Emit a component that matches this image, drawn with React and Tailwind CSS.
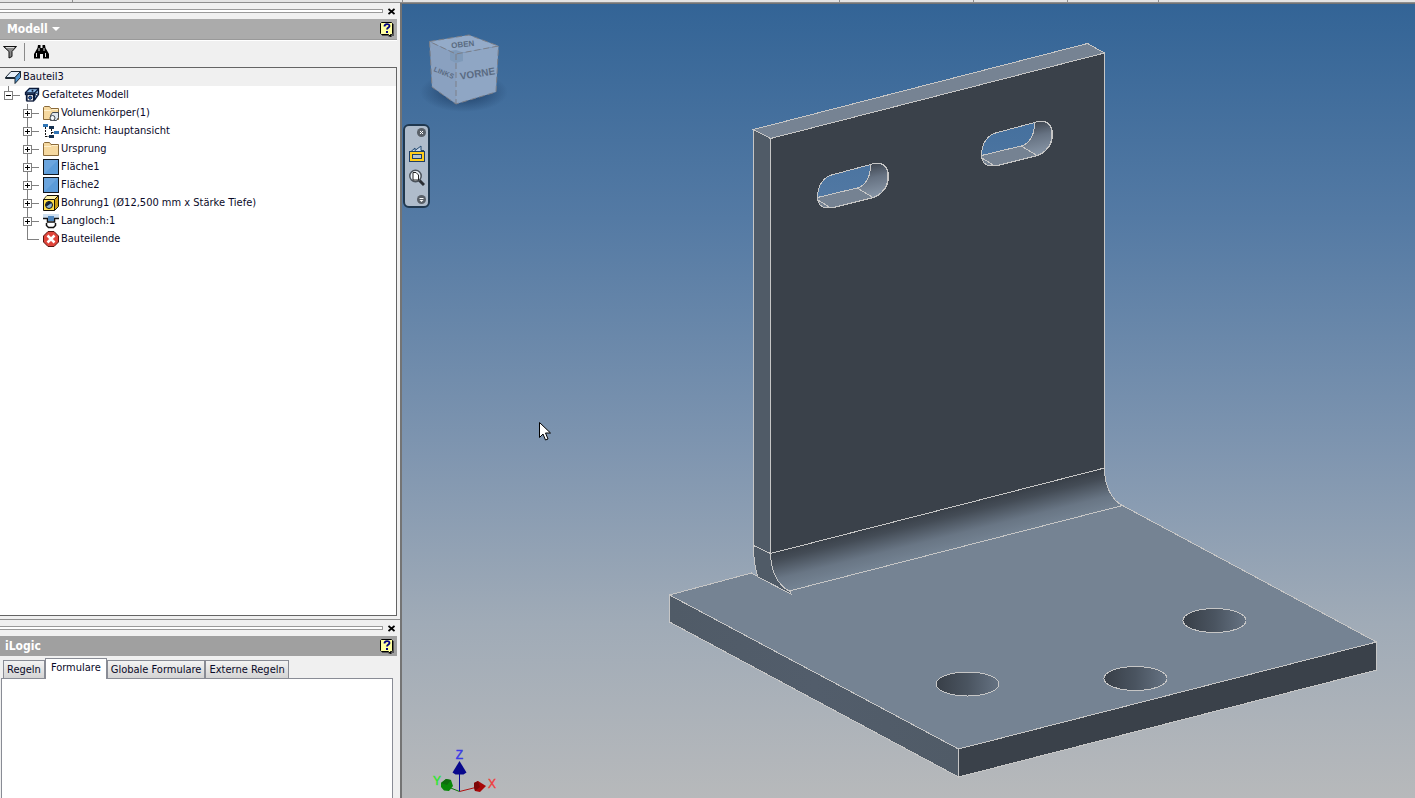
import React, { useState } from 'react';

// Edge colour shared by every visible edge of the part
const EDGE = '#c6c6c6';

const treeItems = [
  { label: 'Volumenkörper(1)', icon: 'solids' },
  { label: 'Ansicht: Hauptansicht', icon: 'view' },
  { label: 'Ursprung', icon: 'folder' },
  { label: 'Fläche1', icon: 'face' },
  { label: 'Fläche2', icon: 'face' },
  { label: 'Bohrung1 (Ø12,500 mm x Stärke Tiefe)', icon: 'hole' },
  { label: 'Langloch:1', icon: 'slot' },
  { label: 'Bauteilende', icon: 'end' },
];

const tabs = ['Regeln', 'Formulare', 'Globale Formulare', 'Externe Regeln'];

const TreeIcon = ({ name }) => (
  <svg className="h-4 w-4 shrink-0" viewBox="0 0 16 16" aria-hidden="true">
    {name === 'part' && (
      <>
        <path d="M.5 8.500 6 2.500h9.500L10 8.500z" fill="#e4eefa" stroke="#1b2733" />
        <path d="M10 8.500 15.500 2.500v6L10 14.500z" fill="#4f93cf" stroke="#1b2733" />
        <path d="M.5 8.500v1H10" fill="none" stroke="#1b2733" />
      </>
    )}
    {name === 'folded' && (
      <>
        <path d="M1.500 7.500v-2l4-4h9v6l-4 5.500h-8V8z" fill="#8fbdea" stroke="#0b1a3a" strokeWidth="1.300" />
        <path d="M1.500 6h9v7M10.500 6l4-4" fill="none" stroke="#0b1a3a" strokeWidth="1.300" />
        <rect x="3" y="7.500" width="6.500" height="6.500" fill="#fff" stroke="#0b1a3a" strokeWidth="1.300" />
        <circle cx="6.200" cy="10.700" r="1.600" fill="#2a64b4" stroke="#0b1a3a" />
        <circle cx="8.500" cy="3.800" r="1" fill="#0b1a3a" />
        <circle cx="12.500" cy="7.500" r="1.200" fill="#fff" stroke="#0b1a3a" />
      </>
    )}
    {(name === 'folder' || name === 'solids') && (
      <>
        <path d="M.5 14.500v-12l1-1h5l1.500 2h7.500v11z" fill="#f6d9a0" stroke="#8a6a3a" />
        <path d="M1 5.500h7l1-1h6" fill="none" stroke="#fff0cc" />
      </>
    )}
    {name === 'solids' && (
      <>
        <path d="M9.500 7.500h6v5l-2 3h-6v-5z" fill="#dfe6ee" stroke="#3f4750" />
        <circle cx="9.500" cy="13" r="2.500" fill="#f4f6f8" stroke="#3f4750" />
      </>
    )}
    {name === 'view' && (
      <>
        <rect x="0" y="1" width="5" height="3" fill="#2f74b5" />
        <rect x="6" y="3" width="5" height="3" fill="#14304f" />
        <rect x="6" y="12" width="5" height="3" fill="#14304f" />
        <rect x="11" y="8" width="5" height="3" fill="#2f74b5" />
        <path d="M2.500 4v10M2.500 13.500H6M8.500 6v5M8.500 9.500H11" stroke="#111" strokeDasharray="2 1" fill="none" />
      </>
    )}
    {name === 'face' && (
      <>
        <rect x=".5" y=".5" width="15" height="15" fill="#5b9bd8" stroke="#10151c" />
        <path d="M1 1h14L1 15z" fill="#6ba5de" />
      </>
    )}
    {name === 'hole' && (
      <>
        <path d="M.5 4.500 4 .5h11.500v11l-4 4H.5z" fill="#ffe04a" stroke="#15120a" />
        <path d="M1 4.500 4 1h11l-3.500 3.500z" fill="#fff2a8" />
        <path d="M11.500 15V4.500L15 1v10.500z" fill="#c99b12" />
        <path d="M.5 4.500h11v11M11.500 4.500l4-4" fill="none" stroke="#15120a" />
        <circle cx="6" cy="10" r="3.500" fill="#8db4da" stroke="#15120a" />
        <path d="M3.500 11.500a3 3 0 0 1 5-3.500z" fill="#142030" />
      </>
    )}
    {name === 'slot' && (
      <>
        <rect x="0" y="1" width="16" height="4" fill="#cfe0f0" />
        <path d="M0 5.500h4.500V9h7V5.500H16" fill="none" stroke="#111" strokeWidth="1.500" />
        <rect x="5" y="3" width="6" height="5" fill="#4f86bd" />
        <path d="M3.500 10v2.500l2 2h5l2-2V10" fill="#fff" stroke="#111" strokeWidth="1.500" />
      </>
    )}
    {name === 'end' && (
      <>
        <path d="M5 .5h6L15.500 5v6L11 15.500H5L.5 11V5z" fill="#e0443a" stroke="#5a1410" />
        <path d="m4.500 4.500 7 7m0-7-7 7" stroke="#fff" strokeWidth="2.500" />
      </>
    )}
  </svg>
);

// Line column in front of a node, with its plus / minus box
const Branch = ({ open, last, first }) => (
  <svg className="block h-[18px] w-4" viewBox="0 0 16 18" shapeRendering="crispEdges" aria-hidden="true">
    <path d={last || first ? 'M4.500 0v9.500' : 'M4.500 0v18'} stroke="#808080" fill="none" />
    <path d="M4 9.500h12" stroke="#808080" />
    {!last && (
      <>
        <rect x=".5" y="5.500" width="8" height="8" fill="#fff" stroke="#808080" />
        <path d="M2 9.500h5" stroke="#000" />
        {!open && <path d="M4.500 7v5" stroke="#000" />}
      </>
    )}
  </svg>
);

const PanelGrip = ({ label }) => (
  <div className="flex h-4 shrink-0 items-center">
    <div className="h-1 flex-1 border-y border-r border-[#9a9a9a] bg-white" />
    <button type="button" aria-label={label} className="ml-1 mr-px flex h-4 w-[9px] items-center justify-center">
      <svg className="h-[7px] w-[7px]" viewBox="0 0 7 7" aria-hidden="true">
        <path d="m.5 1 6 5m0-5-6 5" stroke="#000" strokeWidth="1.800" />
      </svg>
    </button>
  </div>
);

const HelpButton = () => (
  <button type="button" aria-label="Hilfe" className="mr-[3px] block">
    <svg className="block h-[15px] w-[14px]" viewBox="0 0 14 15" aria-hidden="true">
      <path d="M2 2h12v12h-2v1H9l-1-1H2z" fill="#555" />
      <path d="M1.500.5h10l1 1v10l-1 1h-1v2l-2-2h-7l-1-1v-10z" fill="#ffffa0" stroke="#000" />
      <path d="M4.500 4.500c0-3 5-3 5-.5 0 1.500-2.500 1.500-2.500 3.500" fill="none" stroke="#000080" strokeWidth="1.800" />
      <rect x="6" y="9" width="2" height="2" fill="#000080" />
    </svg>
  </button>
);

// Long hole, drawn for the right one; the left one is the same shape moved
const SlotWalls = () => (
  <>
    <path d="M1034.500 122.500C1045 119 1052 123 1052 135c0 10-7 18-15 20.500l-16-9.500c8-2 14-11 13.500-23.500z" fill="url(#slotEnd)" stroke={EDGE} />
    <path d="M981.500 155.500 1021 146l16 9.500-40 10c-10 2-15-2-15.500-10z" fill="#758292" stroke={EDGE} />
    <path d="m982 158 12 7.500" stroke={EDGE} />
    <path d="M981.500 155.500c0-12 6-20 14-22.500l39-10.500" fill="none" stroke={EDGE} />
  </>
);

const PartDrawing = () => (
  <svg className="absolute inset-0 h-full w-full" viewBox="402 4 1013 794" role="img" aria-label="Blechteil">
    <defs>
      <linearGradient id="bend" gradientUnits="userSpaceOnUse" x1="771" y1="553" x2="781" y2="593">
        <stop offset="0" stopColor="#3a414a" />
        <stop offset=".2" stopColor="#444c56" />
        <stop offset=".65" stopColor="#697685" />
        <stop offset="1" stopColor="#758494" />
      </linearGradient>
      <linearGradient id="slotEnd" x1="0" y1="0" x2=".2" y2="1">
        <stop offset="0" stopColor="#343a43" />
        <stop offset=".5" stopColor="#667282" />
        <stop offset="1" stopColor="#8492a3" />
      </linearGradient>
      <linearGradient id="bore">
        <stop offset=".05" stopColor="#3a414a" />
        <stop offset=".5" stopColor="#4a5460" />
        <stop offset="1" stopColor="#667383" />
      </linearGradient>
      <linearGradient id="side" x1="0" y1="0" x2="1" y2="0">
        <stop offset="0" stopColor="#505b67" />
        <stop offset=".5" stopColor="#525d6b" />
        <stop offset="1" stopColor="#505b67" />
      </linearGradient>
    </defs>

    <g stroke={EDGE} strokeWidth="1" shapeRendering="crispEdges">
      {/* Base plate */}
      <path d="m669.500 595 82-22 7 4 32 16.500-1.500-2.500L1122.500 505.500 1376.500 642 958.500 749z" fill="#758393" />
      <path d="m669.500 595 289 154v28l-289-155z" fill="url(#side)" />
      <path d="m958.500 749 418-107v28l-418 107z" fill="#3a414a" />
      <ellipse cx="967.500" cy="684" rx="31.500" ry="12" fill="url(#bore)" />
      <ellipse cx="1135.500" cy="678.500" rx="31.500" ry="12" fill="url(#bore)" />
      <ellipse cx="1214.500" cy="620.500" rx="31.500" ry="12" fill="url(#bore)" />

      {/* Upright plate */}
      <path d="M753.500 129.500 1087.500 43.500l17 9.500-334 85.500z" fill="#768393" />
      <path d="m753.500 129.500 17 9v415l-17-8z" fill="#505b67" />
      <path
        d="M770.500 138.500 1104.500 53v415l-334 85.500zM981.500 155.500c0-12 6-20 14-22.500l39-10.500c11-3.500 18 .5 18 12.500 0 10-7 18-15 20.500l-40 10c-10 2-15-2-16-10zM817.500 197.500c0-12 6-20 14-22.500l39-10.500c11-3.500 18 .5 18 12.500 0 10-7 18-15 20.500l-40 10c-10 2-15-2-16-10z"
        fill="#3a414a"
        fillRule="evenodd"
      />
      <SlotWalls />
      <g transform="translate(-164 42)">
        <SlotWalls />
      </g>

      {/* Bend */}
      <path d="M753.500 545.500c0 12 1 22 4.500 31.500l32 16.500v-2c-13-8-19-22-19.500-38z" fill="#505b67" />
      <path d="M770.500 553.500 1104.500 468c0 18 7 32 18 37.500L789 591c-12-7-18-20-18.500-37.500z" fill="url(#bend)" />
    </g>

    {/* Axis triad */}
    <g>
      <path d="M459.500 791.500V772" stroke="#0a0a96" />
      <path d="m459.500 791.500-10-4" stroke="#0a7a0a" />
      <path d="m459.500 791.500 16-4" stroke="#b01010" />
      <path d="m459.500 761 7 11.500-3 2h-8l-3-2z" fill="#08088c" />
      <path d="m441 783 5-4 5 1 2 6-4 5-5-.5-3-3.500z" fill="#088808" />
      <path d="m441 783 5-4 5 1-4 5z" fill="#0d6d0d" />
      <path d="m474 783 4-2 8 5-6 6-5-1-1-4z" fill="#a80808" />
      <path d="m474 783 4-2 2 6-5 4-1-4z" fill="#7c0606" />
      <g fontFamily="Liberation Sans, sans-serif" fontSize="12" textAnchor="middle" strokeWidth=".4">
        <text x="459.500" y="759" fill="#3a3ae6" stroke="#3a3ae6">Z</text>
        <text x="437" y="785" fill="#2be62b" stroke="#2be62b">Y</text>
        <text x="492" y="788" fill="#f03c3c" stroke="#f03c3c">X</text>
      </g>
    </g>
  </svg>
);

const ViewCube = () => (
  <svg className="absolute left-[18px] top-[26px] h-[90px] w-[90px]" viewBox="420 30 90 90" role="img" aria-label="ViewCube">
    <defs>
      <radialGradient id="cubeShadow">
        <stop offset=".4" stopColor="#24466e" stopOpacity=".75" />
        <stop offset="1" stopColor="#24466e" stopOpacity="0" />
      </radialGradient>
    </defs>
    <ellipse cx="464" cy="92" rx="44" ry="20" fill="url(#cubeShadow)" />
    <path d="M429.500 41.500 469 35l29.500 11-42.500 8z" fill="#94abc9" />
    <path d="M429.500 41.500 456 54v50l-24-17z" fill="#8aa1c0" />
    <path d="M456 54 498.500 46 496 92l-40 12z" fill="#8fa6c4" />
    <path d="m450 51 6-1 7 2.500v8.500l-7 2-6-3z" fill="#7f9ab9" />
    <path
      d="M429.500 41.500 469 35l29.500 11-42.500 8zM429.500 41.500 432 87l24 17 40-12 2.500-46M456 54v50"
      fill="none"
      stroke="#7c7f88"
      strokeDasharray="6 3"
    />
    <g fontFamily="Liberation Sans, sans-serif" fontWeight="700" textAnchor="middle" fill="#5a6b82">
      <text fontSize="10" transform="translate(478 77) rotate(-9)">VORNE</text>
      <text fontSize="7" transform="translate(443 75) rotate(22)">LINKS</text>
      <text fontSize="8" transform="translate(463 47) rotate(-6)">OBEN</text>
    </g>
  </svg>
);

const NavigationBar = () => (
  <div className="absolute left-px top-[120px] flex w-[27px] flex-col items-center rounded-md border-2 border-[#20384f] bg-[#afbccb] py-[2px]">
    <button type="button" aria-label="Schließen" className="mr-[2px] self-end">
      <svg className="block h-[9px] w-[9px]" viewBox="0 0 9 9" aria-hidden="true">
        <circle cx="4.500" cy="4.500" r="4.500" fill="#596068" />
        <path d="m3 3 3 3m0-3L3 6" stroke="#fff" />
      </svg>
    </button>
    <button type="button" aria-label="Navigationsrad" className="mt-2">
      <svg className="block h-[18px] w-4" viewBox="0 0 16 18" aria-hidden="true">
        <path d="M1.500 7 6 3v2.500L12 1v4.500h3" fill="#c8d6e6" stroke="#234a72" />
        <rect x=".5" y="6.500" width="15" height="10" fill="#ffcc1a" stroke="#1e3d66" />
        <rect x="3.500" y="9.500" width="9" height="4" fill="#b6c4d4" stroke="#1e3d66" />
      </svg>
    </button>
    <button type="button" aria-label="Zoom" className="mt-[6px]">
      <svg className="block h-[18px] w-4" viewBox="0 0 16 18" aria-hidden="true">
        <path d="m10 11 5 5" stroke="#2b2f35" strokeWidth="3" />
        <circle cx="6.500" cy="7" r="5.700" fill="#edf2f7" stroke="#4a525b" strokeWidth="1.500" />
        <path d="M4 3.500h3l2.500 2.500v5H4z" fill="#fff" stroke="#222" />
      </svg>
    </button>
    <button type="button" aria-label="Menü" className="mr-[2px] mt-2 self-end">
      <svg className="block h-[9px] w-[9px]" viewBox="0 0 9 9" aria-hidden="true">
        <circle cx="4.500" cy="4.500" r="4.500" fill="#596068" />
        <path d="M2.500 3.500h4" stroke="#fff" />
        <path d="M2.500 5h4l-2 2z" fill="#fff" />
      </svg>
    </button>
  </div>
);

const App = () => {
  const [activeTab, setActiveTab] = useState('Formulare');
  const [expanded, setExpanded] = useState(true);

  return (
    <div className="flex h-screen flex-col overflow-hidden bg-[#f0f0f0] font-['DejaVu_Sans_Condensed','Noto_Sans',sans-serif] text-[11px] leading-4 text-[#0a0a28]">
      {/* Lower edge of the ribbon */}
      <div className="flex h-[3px] shrink-0 border-b border-[#8e8e8e] bg-[#e4e4e4]">
        <div className="w-[73px] border-r border-[#8e8e8e]" />
        <div className="w-[330px] border-r border-[#8e8e8e]" />
        <div className="w-[437px] border-r border-[#8e8e8e]" />
        <div className="w-[134px] border-r border-[#8e8e8e]" />
        <div className="w-[94px] border-r border-[#8e8e8e]" />
        <div className="w-[91px] border-r border-[#8e8e8e]" />
      </div>

      <div className="flex min-h-0 flex-1">
        <aside className="flex w-[400px] shrink-0 flex-col">
          {/* Model browser */}
          <section className="flex min-h-0 flex-1 flex-col pr-[3px]">
            <PanelGrip label="Modell schließen" />
            <div className="flex h-[21px] shrink-0 items-center justify-between border-b border-[#999] bg-[#ababab]">
              <button type="button" className="flex items-center gap-1 pl-[7px] text-xs font-bold text-white">
                Modell
                <svg className="h-1 w-2" viewBox="0 0 8 4" aria-hidden="true">
                  <path d="M0 0h8L4 4z" fill="#fff" />
                </svg>
              </button>
              <HelpButton />
            </div>
            <div className="flex h-[27px] shrink-0 items-center border-t border-white pb-1 pl-[3px]">
              <button type="button" aria-label="Filter">
                <svg className="block h-[14px] w-[15px]" viewBox="0 0 15 14" aria-hidden="true">
                  <path d="M.5 1.500h13L9 6.500v5l-3 1.500V6.500z" fill="#8a8a8a" stroke="#111" />
                  <path d="M3 2.500h8" stroke="#ddd" />
                </svg>
              </button>
              <div className="ml-[6px] h-[18px] w-px bg-[#8a8a8a]" />
              <button type="button" aria-label="Suchen" className="ml-[9px]">
                <svg className="block h-[14px] w-[15px]" viewBox="0 0 15 14" aria-hidden="true">
                  <path d="M4 0h2.500v3H8.500V0H11l.5 3L15 9v4.500H9V9H6v4.500H0V9l3.500-6z" fill="#000" />
                  <path d="M2.500 8v4M5 3v3M11.500 8v4M10 3v3" stroke="#ddd" />
                </svg>
              </button>
            </div>
            <div className="mb-[3px] min-h-0 flex-1 overflow-hidden border-y border-r border-[#646464] bg-white">
              <ul>
                <li>
                  <div className="flex h-[18px] items-center gap-[2px] bg-[#f0f0f0] pl-[5px]">
                    <TreeIcon name="part" />
                    <span>Bauteil3</span>
                  </div>
                  <ul>
                    <li>
                      <div className="flex h-[18px] items-center pl-1">
                        <button type="button" aria-label="Gefaltetes Modell" aria-expanded={expanded} onClick={() => setExpanded(!expanded)}>
                          <Branch open={expanded} first />
                        </button>
                        <div className="ml-1 flex items-center gap-[2px]">
                          <TreeIcon name="folded" />
                          <span>Gefaltetes Modell</span>
                        </div>
                      </div>
                      {expanded && (
                        <ul className="pl-[23px]">
                          {treeItems.map((item) => (
                            <li key={item.label} className="flex h-[18px] items-center">
                              {item.icon === 'end' ? (
                                <Branch last />
                              ) : (
                                <button type="button" aria-label={item.label} aria-expanded="false">
                                  <Branch />
                                </button>
                              )}
                              <div className="ml-1 flex items-center gap-[2px]">
                                <TreeIcon name={item.icon} />
                                <span className="whitespace-nowrap">{item.label}</span>
                              </div>
                            </li>
                          ))}
                        </ul>
                      )}
                    </li>
                  </ul>
                </li>
              </ul>
            </div>
          </section>

          {/* iLogic */}
          <section className="flex h-[179px] shrink-0 flex-col border-t border-[#8e8e8e] pr-[3px]">
            <PanelGrip label="iLogic schließen" />
            <div className="flex h-5 shrink-0 items-center justify-between bg-[#a0a0a0] pl-[5px]">
              <h2 className="text-xs font-bold text-white">iLogic</h2>
              <HelpButton />
            </div>
            <div role="tablist" className="relative flex h-[22px] shrink-0 items-end pl-[3px]">
              {tabs.map((tab) => (
                <button
                  key={tab}
                  type="button"
                  role="tab"
                  aria-selected={tab === activeTab}
                  onClick={() => setActiveTab(tab)}
                  className={
                    tab === activeTab
                      ? '-mb-px h-[21px] border border-b-0 border-[#898c95] bg-white px-[5px] pb-[2px]'
                      : 'h-[18px] border border-b-0 border-[#898c95] bg-linear-to-b from-[#f3f3f3] to-[#d4d4d4] px-[3px]'
                  }
                >
                  {tab}
                </button>
              ))}
            </div>
            <div role="tabpanel" className="ml-px mr-1 flex-1 border border-b-0 border-[#898c95] bg-white" />
          </section>
        </aside>

        {/* Graphics window */}
        <main className="relative min-w-0 flex-1 overflow-hidden border-l-2 border-t border-[#747474] bg-[linear-gradient(to_bottom,#336496_0%,#547aa4_27%,#8096b0_57%,#a0abb7_78%,#b7b9bb_100%)]">
          <PartDrawing />
          <ViewCube />
          <NavigationBar />
          <svg className="absolute left-[137px] top-[418px] h-5 w-3" viewBox="0 0 12 20" aria-hidden="true">
            <path d="M.5.5v15l3.500-3.500 2.500 6 2.500-1-2.500-6h5z" fill="#fff" stroke="#000" />
          </svg>
        </main>
      </div>
    </div>
  );
};

export default App;
